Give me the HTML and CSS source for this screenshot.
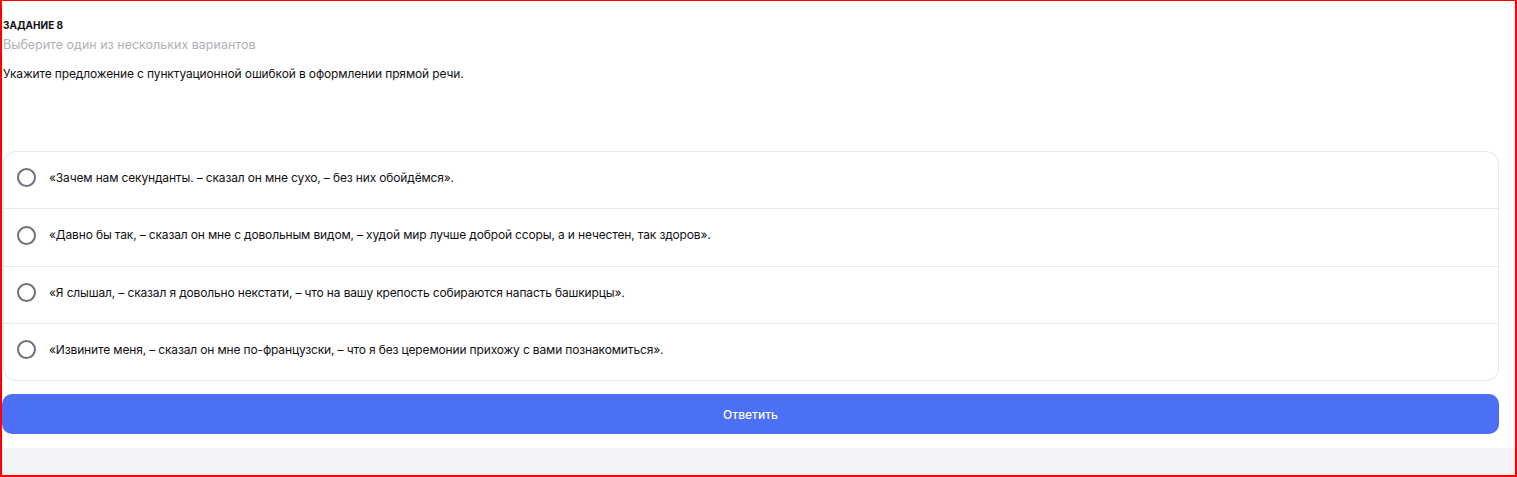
FILE: index.html
```html
<!DOCTYPE html>
<html lang="ru">
<head>
<meta charset="utf-8">
<link rel="stylesheet" href="styles.css">
</head>
<body>
<div class="frame">
  <main class="panel">
    <div class="task">
      <div class="task-label">ЗАДАНИЕ 8</div>
      <div class="task-hint">Выберите один из нескольких вариантов</div>
      <div class="task-question">Укажите предложение с пунктуационной ошибкой в оформлении прямой речи.</div>
    </div>
    <ul class="options">
      <li class="option"><span class="radio"></span><span class="option-text">«Зачем нам секунданты. – сказал он мне сухо, – без них обойдёмся».</span></li>
      <li class="option"><span class="radio"></span><span class="option-text">«Давно бы так, – сказал он мне с довольным видом, – худой мир лучше доброй ссоры, а и нечестен, так здоров».</span></li>
      <li class="option"><span class="radio"></span><span class="option-text">«Я слышал, – сказал я довольно некстати, – что на вашу крепость собираются напасть башкирцы».</span></li>
      <li class="option"><span class="radio"></span><span class="option-text">«Извините меня, – сказал он мне по-французски, – что я без церемонии прихожу с вами познакомиться».</span></li>
    </ul>
    <button class="submit" type="button">Ответить</button>
  </main>
  <div class="footer"></div>
</div>
</body>
</html>
```
FILE: styles.css
```css
html, body {
  margin: 0;
  padding: 0;
  height: 100%;
}
body {
  font-family: Inter, "Noto Sans", sans-serif;
  color: #111114;
  background: #ffffff;
}
.frame {
  box-sizing: border-box;
  height: 477px;
  border-style: solid;
  border-color: #ff0000;
  border-width: 1px 2px 2px 2px;
  background: #f2f2f7;
  display: flex;
  flex-direction: column;
}
.panel {
  background: #ffffff;
  padding: 0 16px 14px 0;
  display: flex;
  flex-direction: column;
}
.task {
  padding: 17px 0 0 1px;
}
.task-label {
  font-size: 10px;
  font-weight: 700;
  line-height: 14px;
  letter-spacing: 0;
}
.task-hint {
  margin-top: 5px;
  font-size: 12.5px;
  line-height: 16px;
  color: #b0b0ba;
}
.task-question {
  margin-top: 13px;
  font-size: 12px;
  line-height: 16px;
  letter-spacing: -0.13px;
  color: #111114;
}
.options {
  list-style: none;
  margin: 69px 0 0 1px;
  padding: 0;
  border: 1px solid #e6e6ec;
  border-radius: 13px;
}
.option {
  box-sizing: border-box;
  display: flex;
  align-items: center;
  gap: 13px;
  height: 57px;
  padding: 0 13px 5px 13px;
  border-top: 1px solid #e6e6ec;
}
.option:nth-child(2) {
  height: 58px;
}
.option:first-child {
  border-top: none;
  height: 56px;
}
.radio {
  box-sizing: border-box;
  width: 19px;
  height: 19px;
  border: 2px solid #6f6f7d;
  border-radius: 50%;
  flex-shrink: 0;
}
.option-text {
  font-size: 12px;
  line-height: 16px;
  letter-spacing: -0.15px;
  color: #111114;
}
.submit {
  margin-top: 13px;
  height: 40px;
  border: none;
  border-radius: 10px;
  background: #4b70f5;
  color: #ffffff;
  font-family: Inter, "Noto Sans", sans-serif;
  font-size: 12px;
  font-weight: 500;
  cursor: pointer;
}
.footer {
  flex: 1;
}
```
